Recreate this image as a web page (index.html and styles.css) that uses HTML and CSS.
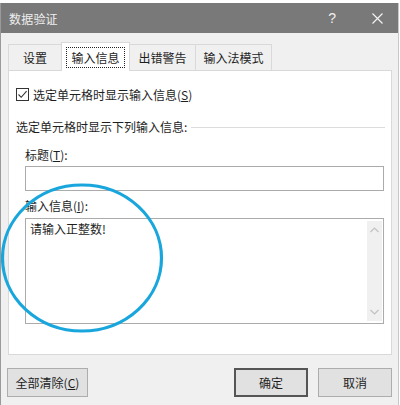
FILE: index.html
```html
<!DOCTYPE html>
<html lang="zh-CN">
<head>
    <meta charset="UTF-8">
    <title>数据验证</title>
    <link rel="stylesheet" href="styles.css">
</head>
<body>

    <div class="dialog">
        <div class="titlebar">
            <span class="title">数据验证</span>
            <span class="help">?</span>
            <span class="close">
                <svg width="11" height="11" viewBox="0 0 11 11"><path d="M0.5 0.5 L10.5 10.5 M10.5 0.5 L0.5 10.5" stroke="#f2f2f2" stroke-width="1.2" fill="none"/></svg>
            </span>
        </div>

        <div class="tabs">
            <div class="tab tab-settings">设置</div>
            <div class="tab active tab-input"><span class="focus">输入信息</span></div>
            <div class="tab tab-error">出错警告</div>
            <div class="tab tab-ime">输入法模式</div>
        </div>

        <div class="panel">
            <div class="check-row">
                <span class="checkbox">
                    <svg width="11" height="11" viewBox="0 0 11 11"><path d="M1.5 5.5 L4.2 8.3 L9.6 2.2" stroke="#333" stroke-width="1.1" fill="none"/></svg>
                </span>
                <span>选定单元格时显示输入信息(<u>S</u>)</span>
            </div>

            <div class="group-label">
                <span>选定单元格时显示下列输入信息:</span>
                <span class="rule"></span>
            </div>

            <div class="field-label">标题(<u>T</u>):</div>
            <div class="input"></div>

            <div class="field-label message-label">输入信息(<u>I</u>):</div>
            <div class="textarea">
                <div class="text">请输入正整数!</div>
                <div class="scrollbar">
                    <svg width="9" height="6" viewBox="0 0 9 6"><path d="M0.5 5 L4.5 1 L8.5 5" stroke="#c2c2c2" stroke-width="1.2" fill="none"/></svg>
                    <svg width="9" height="6" viewBox="0 0 9 6"><path d="M0.5 1 L4.5 5 L8.5 1" stroke="#c2c2c2" stroke-width="1.2" fill="none"/></svg>
                </div>
            </div>
        </div>

        <div class="footer">
            <button class="btn btn-clear">全部清除(<u>C</u>)</button>
            <span class="spacer"></span>
            <button class="btn btn-ok">确定</button>
            <button class="btn btn-cancel">取消</button>
        </div>

        <svg class="annotation" width="170" height="160" viewBox="0 0 170 160">
            <ellipse cx="82" cy="80" rx="79.5" ry="73" stroke="#19a6dd" stroke-width="3.2" fill="none"/>
        </svg>
    </div>

</body>
</html>
```

FILE: styles.css
```css
body {
    margin: 0;
    background-color: #fff;
    font-family: "Noto Sans CJK SC", "Noto Sans", sans-serif;
    font-size: 12px;
    color: #1e1e1e;
}

.dialog {
    position: relative;
    width: 397px;
    height: 402px;
    margin-top: 3px;
    background-color: #f0f0f0;
    border-left: 1px solid #9a9a9a;
    border-right: 1px solid #c8c8c8;
    display: flex;
    flex-direction: column;
    overflow: hidden;
}

.titlebar {
    height: 30px;
    background-color: #797979;
    color: #efefef;
    display: flex;
    align-items: center;
    padding-left: 8px;
    font-size: 12px;
}

.title {
    flex: 1;
    letter-spacing: 0.2px;
}

.help {
    font-family: "Liberation Sans", sans-serif;
    font-size: 14px;
    margin-right: 36px;
}

.close {
    display: flex;
    margin-right: 15px;
}

.tabs {
    display: flex;
    align-items: flex-end;
    height: 28px;
    margin-top: 9px;
    padding-left: 7px;
}

.tab {
    height: 25px;
    border: 1px solid #d9d9d9;
    border-bottom: none;
    background-color: #f0f0f0;
    display: flex;
    align-items: center;
    justify-content: center;
    line-height: 16px;
    margin-right: -1px;
}

.tab-settings { width: 52px; }
.tab-error { width: 65px; }
.tab-ime { width: 75px; }

.tab.active {
    width: 67px;
    height: 28px;
    background-color: #fff;
    margin-bottom: -1px;
    position: relative;
    z-index: 1;
}

.focus {
    border: 1px dotted #222;
    padding: 2px 4px 1px;
}

.panel {
    width: 382px;
    height: 283px;
    margin-left: 7px;
    background-color: #fff;
    border: 1px solid #d9d9d9;
    display: flex;
    flex-direction: column;
}

.check-row {
    display: flex;
    align-items: center;
    height: 13px;
    margin-top: 17px;
    padding-left: 7px;
    line-height: 16px;
}

.checkbox {
    width: 11px;
    height: 11px;
    border: 1px solid #333;
    background-color: #fff;
    display: flex;
    margin-right: 4px;
}

.group-label {
    display: flex;
    align-items: center;
    margin-top: 18px;
    padding-left: 7px;
    line-height: 16px;
}

.rule {
    flex: 1;
    height: 1px;
    background-color: #dcdcdc;
    margin-left: 4px;
    margin-right: 6px;
}

.field-label {
    margin-top: 12px;
    padding-left: 16px;
    line-height: 16px;
}

.message-label {
    margin-top: 7px;
}

.input {
    height: 23px;
    margin: 3px 7px 0 16px;
    border: 1px solid #ababab;
    background-color: #fff;
}

.textarea {
    height: 104px;
    margin: 4px 7px 0 16px;
    border: 1px solid #ababab;
    display: flex;
}

.text {
    flex: 1;
    padding: 2px 0 0 4px;
    line-height: 16px;
}

.scrollbar {
    width: 15px;
    margin: 2px 1px 2px 0;
    background-color: #f0f0f0;
    display: flex;
    flex-direction: column;
    align-items: center;
    justify-content: space-between;
    padding: 6px 0 6px;
}

.footer {
    display: flex;
    margin-top: 13px;
    padding: 0 6px 0 6px;
}

.spacer {
    flex: 1;
}

.btn {
    height: 29px;
    font-family: inherit;
    font-size: 12px;
    color: #1e1e1e;
    background-color: #e1e1e1;
    border: 1px solid #adadad;
    padding: 0;
    line-height: 16px;
}

.btn-clear { width: 81px; }

.btn-ok {
    width: 74px;
    border: 2px solid #555;
    margin-right: 10px;
}

.btn-cancel { width: 74px; }

.annotation {
    position: absolute;
    left: -1px;
    top: 175px;
}
```
